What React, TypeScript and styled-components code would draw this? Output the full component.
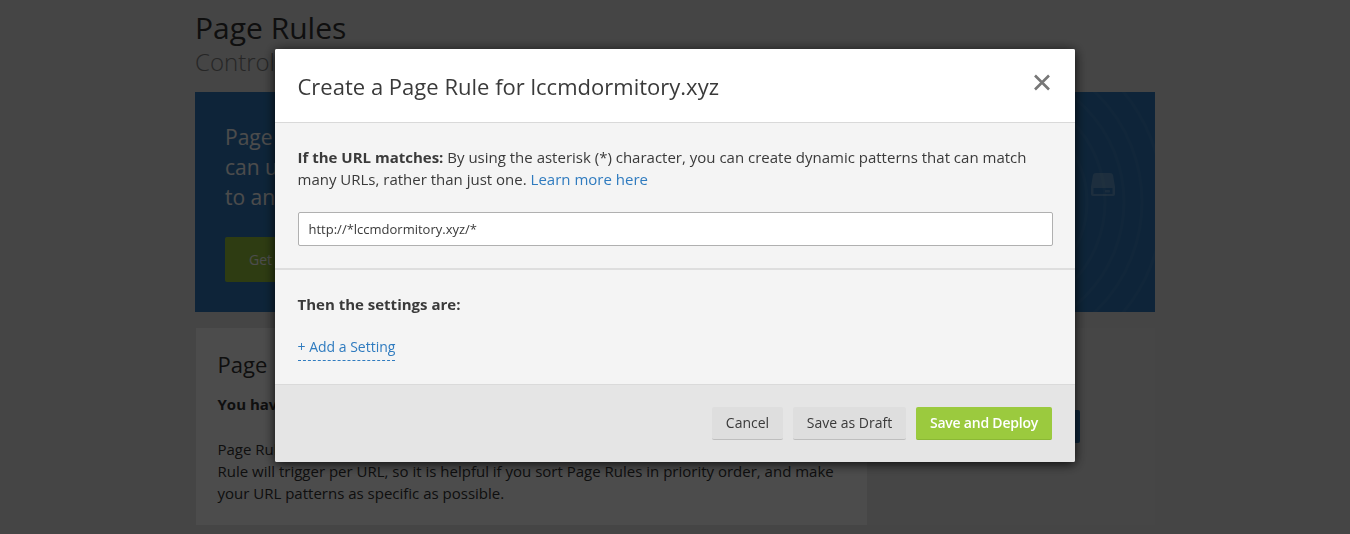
import React from "react";
import styled, { createGlobalStyle, css } from "styled-components";

const GlobalStyle = createGlobalStyle`
  *, *::before, *::after { box-sizing: border-box; }
  html, body { margin: 0; height: 534px; overflow: hidden; }
  body {
    background: #e6e6e6;
    color: #333;
    font-family: "Open Sans", "Liberation Sans", sans-serif;
    font-size: 15px;
    line-height: 22px;
  }
  h1, h2, h3, p { margin: 0; }
  button, input { font-family: inherit; }
`;

const Page = styled.main`
  width: 960px;
  height: 534px;
  margin: 0 auto;
  overflow: hidden;
  white-space: nowrap;
`;

const PageTitle = styled.h1`
  padding-top: 8px;
  font-size: 30px;
  font-weight: 400;
  line-height: 40px;
`;

const PageSubtitle = styled.p`
  height: 44px;
  color: #808080;
  font-size: 24px;
  font-weight: 300;
  line-height: 28px;
`;

const Banner = styled.section`
  display: flex;
  justify-content: space-between;
  height: 220px;
  background: #2f7bbf;
  color: #fff;
`;

const BannerCopy = styled.div`
  padding: 30px 0 0 30px;
`;

const BannerText = styled.p`
  font-size: 21px;
  line-height: 30px;
`;

const BannerButton = styled.button`
  display: block;
  width: 160px;
  height: 45px;
  margin-top: 25px;
  padding: 0 24px 1px;
  border: 0;
  border-radius: 2px;
  background: #9bca3e;
  color: #fff;
  font-size: 14px;
  text-align: left;
`;

const Card = styled.section`
  display: flex;
  height: 197px;
  margin: 16px 0 0 1px;
  background: #ebebeb;
`;

const CardMain = styled.div`
  width: 671px;
  padding: 22px 21.5px;
  background: #fff;
`;

const CardTitle = styled.h2`
  font-size: 22px;
  font-weight: 400;
  line-height: 28px;
`;

const CardLead = styled.p`
  margin: 15px 0 23px;
  font-weight: 700;
`;

const CardSide = styled.div`
  display: flex;
  flex: 1;
  align-items: center;
  justify-content: flex-end;
  padding-right: 75px;
`;

const CreateButton = styled.button`
  width: 137px;
  height: 33px;
  border: 0;
  border-radius: 2px;
  background: #2f7bbf;
  color: #fff;
  font-size: 14px;
`;

const Overlay = styled.div`
  position: fixed;
  inset: 0;
  display: flex;
  justify-content: center;
  align-items: flex-start;
  padding-top: 49px;
  background: rgba(0, 0, 0, 0.7);
`;

const Modal = styled.div`
  width: 800px;
  border-radius: 2px;
  background: #f4f4f4;
  box-shadow: 0 2px 12px rgba(0, 0, 0, 0.85);
  color: #3a3a3a;
`;

const ModalHeader = styled.header`
  display: flex;
  justify-content: space-between;
  height: 74px;
  padding: 21px 23.5px 0 22.5px;
  border-bottom: 1px solid #d9d9d9;
  border-radius: 2px 2px 0 0;
  background: #fff;
`;

const ModalTitle = styled.h2`
  font-size: 22px;
  font-weight: 400;
  letter-spacing: 0.01px;
  line-height: 32px;
`;

const CloseButton = styled.button`
  width: 20px;
  height: 20px;
  margin-top: 2px;
  padding: 0;
  border: 0;
  background: none;
`;

const ModalSection = styled.section<{ $divided?: boolean; $height: number }>`
  height: ${(p) => p.$height}px;
  padding: 23px 22px 0 22.5px;
  ${(p) =>
    p.$divided &&
    css`
      border-bottom: 2px solid #dedede;
    `}
`;

const Link = styled.a`
  color: #2f7bbf;
  text-decoration: none;
`;

const UrlInput = styled.input`
  display: block;
  width: 100%;
  height: 34px;
  margin-top: 22px;
  padding: 0 10px;
  border: 1px solid #b0b0b0;
  border-radius: 2px;
  outline: 0;
  background: #fff;
  color: #3a3a3a;
  font-size: 13px;
`;

const AddSetting = styled.button`
  display: block;
  height: 25px;
  margin-top: 21px;
  padding: 0 0 3px;
  border: 0;
  border-bottom: 1px dashed #2f7bbf;
  background: none;
  color: #2f7bbf;
  font-size: 14px;
  line-height: 21px;
`;

const ModalFooter = styled.footer`
  display: flex;
  justify-content: flex-end;
  gap: 10px;
  height: 78px;
  padding: 22px 23px 0;
  border-top: 1px solid #dadada;
  border-radius: 0 0 2px 2px;
  background: #e5e5e5;
`;

const Button = styled.button<{ $primary?: boolean; $width: number }>`
  width: ${(p) => p.$width}px;
  height: 33px;
  padding: 0 0 1px;
  border: 0;
  border-bottom: 1px solid ${(p) => (p.$primary ? "#8bb835" : "#bebebe")};
  border-radius: 2px;
  background: ${(p) => (p.$primary ? "#9bca3e" : "#dedede")};
  color: ${(p) => (p.$primary ? "#fff" : "#3a3a3a")};
  font-size: 14px;
  font-weight: ${(p) => (p.$primary ? 600 : 400)};
  letter-spacing: ${(p) => (p.$primary ? "-0.22px" : "normal")};
  white-space: nowrap;
`;

const NetworkArt = () => (
  <svg width="120" height="220" viewBox="0 0 120 220" fill="none" aria-hidden="true">
    <g stroke="#fff" strokeOpacity="0.05" strokeWidth="3">
      {[97, 115, 134, 152, 173].map((r) => (
        <circle key={r} cx="-45" cy="110" r={r} />
      ))}
    </g>
    <path
      fill="#fff"
      fillOpacity="0.25"
      fillRule="evenodd"
      d="M61 81h14q2.500 0 3 2l2 12v7q0 2-2 2H58q-2 0-2-2v-7l2-12q.5-2 3-2ZM58.500 96v6h19v-6Z"
    />
    <rect x="70" y="98" width="5" height="2.500" rx="1" fill="#fff" fillOpacity="0.2" />
  </svg>
);

export default function App() {
  return (
    <>
      <GlobalStyle />
      <Page>
        <PageTitle>Page Rules</PageTitle>
        <PageSubtitle>Control</PageSubtitle>
        <Banner>
          <BannerCopy>
            <BannerText>
              Page
              <br />
              can use
              <br />
              to any
            </BannerText>
            <BannerButton>Get</BannerButton>
          </BannerCopy>
          <NetworkArt />
        </Banner>
        <Card>
          <CardMain>
            <CardTitle>Page</CardTitle>
            <CardLead>You have</CardLead>
            <p>
              Page Rules
              <br />
              Rule will trigger per URL, so it is helpful if you sort Page Rules in priority order, and make
              <br />
              your URL patterns as specific as possible.
            </p>
          </CardMain>
          <CardSide>
            <CreateButton aria-label="Create Page Rule" />
          </CardSide>
        </Card>
      </Page>
      <Overlay>
        <Modal role="dialog">
          <ModalHeader>
            <ModalTitle>Create a Page Rule for lccmdormitory.xyz</ModalTitle>
            <CloseButton aria-label="Close">
              <svg width="20" height="20" viewBox="0 0 20 20" stroke="#777" strokeWidth="2.600">
                <path d="M3 3.500 17 17.500M17 3.500 3 17.500" />
              </svg>
            </CloseButton>
          </ModalHeader>
          <ModalSection $divided $height={147}>
            <p>
              <strong>If the URL matches:</strong> By using the asterisk (*) character, you can create dynamic
              patterns that can match many URLs, rather than just one. <Link>Learn more here</Link>
            </p>
            <UrlInput defaultValue="http://*lccmdormitory.xyz/*" />
          </ModalSection>
          <ModalSection $height={114}>
            <strong>Then the settings are:</strong>
            <AddSetting>+ Add a Setting</AddSetting>
          </ModalSection>
          <ModalFooter>
            <Button $width={71}>Cancel</Button>
            <Button $width={113}>Save as Draft</Button>
            <Button $primary $width={136}>
              Save and Deploy
            </Button>
          </ModalFooter>
        </Modal>
      </Overlay>
    </>
  );
}
